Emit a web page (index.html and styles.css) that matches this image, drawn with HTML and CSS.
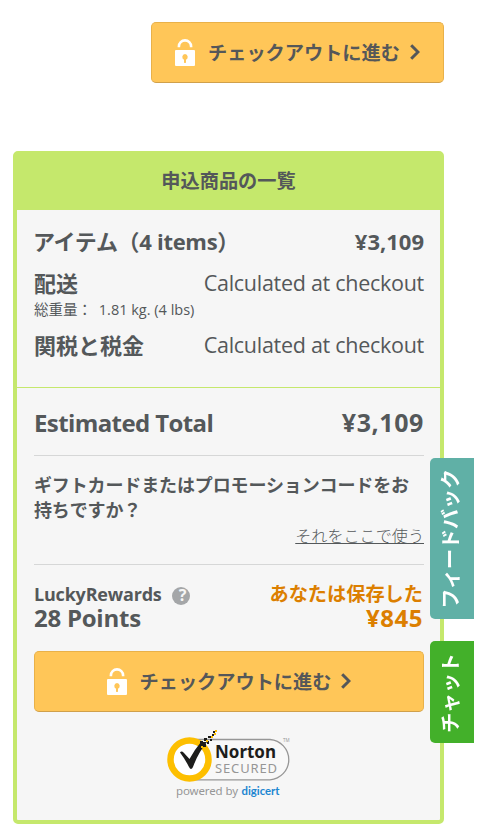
FILE: index.html
```
<!DOCTYPE html>
<html lang="ja">
<head>
    <meta charset="utf-8">
    <title>申込商品の一覧</title>
    <link rel="stylesheet" href="styles.css">
</head>
<body>

<svg width="0" height="0" class="defs">
    <symbol id="lock" viewBox="0 0 20 28">
        <path d="M3.9 9.200 V8.500 A6.1 6.1 0 0 1 16.1 8.500 V9.200" fill="none" stroke="#fff" stroke-width="2.6"/>
        <path fill="#fff" fill-rule="evenodd" d="M1 12H19Q20 12 20 13V27Q20 28 19 28H1Q0 28 0 27V13Q0 12 1 12ZM10 16A3 3 0 0 0 9 21.7V24.5Q10 25.5 11 24.5V21.7A3 3 0 0 0 10 16Z"/>
    </symbol>
    <symbol id="arrow" viewBox="0 0 10 16">
        <path d="M1.2 1.2 L8 8 L1.2 14.8" fill="none" stroke="#555759" stroke-width="3"/>
    </symbol>
</svg>

<div class="page">
    <a class="checkout top">
        <svg class="lock"><use href="#lock"/></svg>
        <span>チェックアウトに進む</span>
        <svg class="arrow"><use href="#arrow"/></svg>
    </a>

    <div class="summary">
        <div class="title">申込商品の一覧</div>

        <div class="items">
            <div class="row"><b class="count">アイテム（4 items）</b><b class="price">¥3,109</b></div>
            <div class="row shipping"><b>配送</b><span class="calc">Calculated at checkout</span></div>
            <div class="weight">総重量： <span>1.81 kg. (4 lbs)</span></div>
            <div class="row tax"><b>関税と税金</b><span class="calc">Calculated at checkout</span></div>
        </div>

        <div class="totals">
            <div class="row total"><b>Estimated Total</b><b class="sum">¥3,109</b></div>
            <div class="promo">
                <div class="question">ギフトカードまたはプロモーションコードをお<br>持ちですか？</div>
                <div class="use"><a>それをここで使う</a></div>
            </div>
            <div class="rewards">
                <div>
                    <div class="lucky"><span>LuckyRewards</span><i class="help">?</i></div>
                    <div class="points">28 Points</div>
                </div>
                <div class="saved">
                    <div class="label">あなたは保存した</div>
                    <div class="amount">¥845</div>
                </div>
            </div>
            <a class="checkout">
                <svg class="lock"><use href="#lock"/></svg>
                <span>チェックアウトに進む</span>
                <svg class="arrow"><use href="#arrow"/></svg>
            </a>
            <svg class="norton" width="126" height="72" viewBox="0 0 126 72">
                <path d="M22 9.5 H103 A20.2 20.2 0 0 1 103 49.8 H22" fill="#f8f8f8" stroke="#969696" stroke-width="1.3"/>
                <circle cx="22.5" cy="29.5" r="19" fill="#fff" stroke="#fdbf00" stroke-width="6.5"/>
                <path d="M13 22.5 Q14.5 20.5 17 23 L22.5 29 Q28 19 34 12 L40 12 Q31 23 26 37 Q24 41 22 37 Q18 29 13 22.5Z" fill="#1d1d1b"/>
                <path d="M33 11h3v3h-3zM37 8h3v3h-3zM40 11h2v3h-2zM36 14h3v3h-3zM41 6h3v2h-3zM43 9h2v2h-2zM45 4h2v2h-2zM46 1h2v2h-2z" fill="#1d1d1b"/>
                <path d="M39 10h2v2h-2zM44 6h2v2h-2zM47 3h2v2h-2zM48 0h2v2h-2zM34 16h2v2h-2z" fill="#fdbf00"/>
                <text x="48" y="28" class="n-name" textLength="61" lengthAdjust="spacingAndGlyphs">Norton</text>
                <text x="48" y="42.5" class="n-sec" textLength="62">SECURED</text>
                <text x="116" y="11.5" class="n-tm">TM</text>
                <text x="9" y="65" class="n-by" textLength="62">powered by</text>
                <text x="74.5" y="65" class="n-digi" textLength="38" lengthAdjust="spacingAndGlyphs">digicert</text>
            </svg>
        </div>
    </div>
</div>

<div class="tab feedback"><span>フィードバック</span></div>
<div class="tab chat"><span>チャット</span></div>

</body>
</html>
```
FILE: styles.css
```
* { box-sizing: border-box; }
body {
    margin: 0;
    background: #fff;
    color: #54585a;
    font-family: "Open Sans", "Noto Sans CJK JP", sans-serif;
    font-size: 22px;
}
.defs { position: absolute; }
.page {
    width: 431px;
    margin-left: 13px;
    padding-top: 22px;
    display: flex;
    flex-direction: column;
}
.checkout {
    display: flex;
    align-items: center;
    justify-content: center;
    height: 61px;
    border: 1px solid #e9b149;
    border-bottom-color: #d0a04b;
    border-radius: 5px;
    background: #ffc658;
    color: #555759;
    font-size: 19.2px;
    font-weight: bold;
    line-height: 30px;
    white-space: nowrap;
}
.checkout.top {
    width: 293px;
    align-self: flex-end;
    margin-bottom: 68px;
}
.lock { width: 20px; height: 28px; margin: 0 13px 1px 0; }
.arrow { width: 10px; height: 16px; margin: 0 0 1px 10px; }

.summary {
    height: 673px;
    border: 4px solid #c5e86c;
    border-radius: 5px;
    background: #f6f6f6;
}
.title {
    height: 55px;
    background: #c5e86c;
    font-size: 19.2px;
    font-weight: bold;
    line-height: 52px;
    text-align: center;
}
.row {
    display: flex;
    justify-content: space-between;
    line-height: 32px;
    white-space: nowrap;
}
.items {
    padding: 15px 16px 25px 17px;
    height: 178px;
    border-bottom: 1px solid #c5e86c;
}
.count { margin-left: -1px; letter-spacing: -0.3px; }
.calc { font-size: 21.5px; letter-spacing: -0.28px; }
.shipping { margin-top: 10px; }
.tax { margin-top: 9px; }
.weight {
    margin-top: 1px;
    font-size: 14.5px;
    line-height: 20px;
}
.weight span { margin-left: 3px; }
.totals {
    display: flex;
    flex-direction: column;
    padding: 17px 16px 0 17px;
}
.total {
    height: 51px;
    border-bottom: 1px solid #d6d7d7;
    font-size: 24px;
    letter-spacing: -0.6px;
    line-height: 35px;
}
.sum { font-size: 25px; letter-spacing: 0.6px; }
.promo {
    height: 109px;
    padding-top: 17px;
    border-bottom: 1px solid #d6d7d7;
}
.question {
    font-size: 18px;
    letter-spacing: -0.13px;
    font-weight: bold;
    line-height: 25px;
    white-space: nowrap;
}
.use {
    font-size: 16.1px;
    font-weight: 300;
    line-height: 26px;
    text-align: right;
}
.use a { text-decoration: underline; }
.rewards {
    display: flex;
    justify-content: space-between;
    height: 86px;
    padding-top: 17px;
    font-weight: bold;
    line-height: 24px;
}
.lucky { display: flex; align-items: center; font-size: 18px; letter-spacing: -0.2px; }
.points, .amount { font-size: 24px; }
.points { letter-spacing: -0.25px; }
.amount { letter-spacing: 0.5px; }
.help {
    width: 18px;
    height: 18px;
    margin: 3px 0 0 10.5px;
    padding-left: 3px;
    border-radius: 50%;
    background: #a4a6a8;
    color: #f6f6f6;
    font-size: 16px;
    font-style: normal;
    line-height: 17px;
    text-align: center;
}
.saved { padding-right: 1px; color: #dc7f00; text-align: right; }
.label { font-size: 19.2px; }

.norton { margin: 18px 0 0 133px; }
.n-name { font: bold 18px "Noto Sans", sans-serif; fill: #1d1d1b; }
.n-sec { font: 13px "Noto Sans", sans-serif; fill: #969696; }
.n-tm { font: 4.5px "Noto Sans", sans-serif; fill: #969696; }
.n-by { font: 11.5px "Noto Sans", sans-serif; fill: #969696; }
.n-digi { font: bold 11.5px Lato, sans-serif; fill: #1c86d1; }

/* side tabs stay over the page */
.tab {
    position: fixed;
    left: 430px;
    width: 44px;
    padding-right: 3px;
    display: flex;
    align-items: center;
    justify-content: center;
    border-radius: 5px 0 0 5px;
    color: #fff;
    font-size: 20px;
    font-weight: bold;
    line-height: 44px;
}
.tab span { writing-mode: vertical-rl; text-orientation: sideways; transform: rotate(180deg); white-space: nowrap; }
.feedback { top: 458px; height: 161px; background: #60b0a6; }
.chat { top: 641px; height: 102px; padding-top: 2px; background: #43b02a; }
```
